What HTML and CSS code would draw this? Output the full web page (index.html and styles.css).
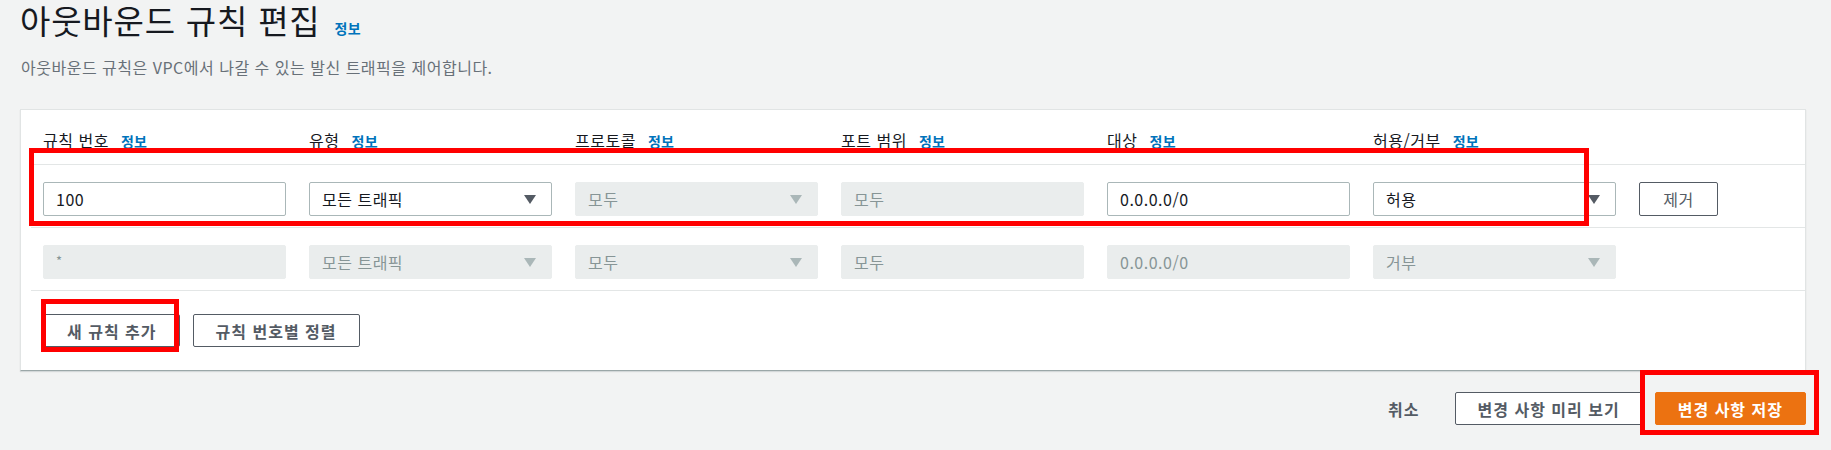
FILE: index.html
```html
<!DOCTYPE html>
<html lang="ko">
<head>
<meta charset="utf-8">
<title>아웃바운드 규칙 편집</title>
<link rel="stylesheet" href="styles.css">
</head>
<body>
<div class="page">
  <h1 class="title">아웃바운드 규칙 편집<a class="info title-info">정보</a></h1>
  <p class="desc">아웃바운드 규칙은 VPC에서 나갈 수 있는 발신 트래픽을 제어합니다.</p>

  <div class="card">
    <div class="table">
      <div class="row head">
        <div class="th">규칙 번호<a class="info">정보</a></div>
        <div class="th">유형<a class="info">정보</a></div>
        <div class="th">프로토콜<a class="info">정보</a></div>
        <div class="th">포트 범위<a class="info">정보</a></div>
        <div class="th">대상<a class="info">정보</a></div>
        <div class="th">허용/거부<a class="info">정보</a></div>
        <div class="th"></div>
      </div>
      <div class="row">
        <div class="field">100</div>
        <div class="field select">모든 트래픽<span class="caret"></span></div>
        <div class="field select disabled">모두<span class="caret"></span></div>
        <div class="field disabled">모두</div>
        <div class="field">0.0.0.0/0</div>
        <div class="field select">허용<span class="caret"></span></div>
        <div class="cell-btn"><button class="btn btn-remove">제거</button></div>
      </div>
      <div class="row">
        <div class="field disabled"><span class="star">*</span></div>
        <div class="field select disabled">모든 트래픽<span class="caret"></span></div>
        <div class="field select disabled">모두<span class="caret"></span></div>
        <div class="field disabled">모두</div>
        <div class="field disabled">0.0.0.0/0</div>
        <div class="field select disabled">거부<span class="caret"></span></div>
        <div class="cell-btn"></div>
      </div>
    </div>
    <div class="card-actions">
      <button class="btn">새 규칙 추가</button>
      <button class="btn">규칙 번호별 정렬</button>
    </div>
  </div>

  <div class="footer">
    <button class="btn btn-link">취소</button>
    <button class="btn">변경 사항 미리 보기</button>
    <button class="btn btn-primary">변경 사항 저장</button>
  </div>

  <div class="mark mark-rules"></div>
  <div class="mark mark-add"></div>
  <div class="mark mark-save"></div>
</div>
</body>
</html>
```

FILE: styles.css
```css
* {
  box-sizing: border-box;
}

html, body {
  margin: 0;
  padding: 0;
  background: #f2f3f3;
}

body {
  font-family: "Noto Sans CJK KR", "Noto Sans", sans-serif;
  color: #16191f;
  font-size: 16px;
  letter-spacing: 0.5px;
}

.page {
  position: relative;
  padding: 0 25px 0 20px;
  min-height: 450px;
}

.title {
  margin: -4px 0 0;
  font-size: 33px;
  line-height: 48px;
  font-weight: 400;
  letter-spacing: 0.8px;
  color: #16191f;
  white-space: nowrap;
}

.info {
  color: #0073bb;
  font-size: 14px;
  line-height: 16px;
  font-weight: 700;
  letter-spacing: 0.3px;
  margin-left: 12px;
  text-decoration: none;
}

.title-info {
  margin-left: 14px;
}

.desc {
  margin: 11px 0 0 1px;
  font-size: 16px;
  line-height: 24px;
  height: 24px;
  color: #687078;
}

.card {
  margin-top: 30px;
  background: #fff;
  border: 1px solid #e1e4e4;
  border-bottom-color: #9ba7a8;
  box-shadow: 0 1px 1px rgba(0, 28, 36, 0.12);
}

.table {
  margin-left: 10px;
}

.row {
  display: grid;
  grid-template-columns: repeat(6, 243px) 79px;
  column-gap: 23px;
  padding: 17px 0 11px 12px;
  border-bottom: 1px solid #e3e6e6;
  align-items: center;
}

.row.head {
  padding: 18px 0 12px 12px;
}

.th {
  height: 24px;
  font-size: 16px;
  line-height: 24px;
  color: #16191f;
  white-space: nowrap;
}

.field {
  height: 34px;
  display: flex;
  align-items: center;
  padding: 0 15px 0 12px;
  border: 1px solid #aab7b8;
  border-radius: 2px;
  background: #fff;
  font-size: 16px;
  color: #16191f;
  white-space: nowrap;
}

.field.disabled {
  background: #eaeded;
  border-color: #eaeded;
  color: #879596;
}

.star {
  font-size: 13px;
  align-self: flex-start;
  margin-top: 5px;
}

.caret {
  margin-left: auto;
  width: 0;
  height: 0;
  border-left: 6px solid transparent;
  border-right: 6px solid transparent;
  border-top: 9px solid #545b64;
}

.field.disabled .caret {
  border-top-color: #aab7b8;
}

.cell-btn {
  display: flex;
}

.btn {
  height: 33px;
  padding: 0 22px;
  border: 1px solid #545b64;
  border-radius: 2px;
  background: #fff;
  color: #545b64;
  font-family: "Noto Sans CJK KR", "Noto Sans", sans-serif;
  font-size: 16px;
  font-weight: 700;
  letter-spacing: 1px;
  line-height: 1;
  white-space: nowrap;
}

.btn-remove {
  width: 79px;
  height: 34px;
  padding: 0;
  font-weight: 400;
  letter-spacing: 0.5px;
  color: #545b64;
}

.card-actions {
  display: flex;
  gap: 13px;
  padding: 23px 0 23px 23px;
}

.footer {
  display: flex;
  justify-content: flex-end;
  gap: 12px;
  margin-top: 21px;
}

.btn-link {
  border-color: transparent;
  background: transparent;
}

.btn-primary {
  background: #ec7211;
  border-color: #ec7211;
  color: #fff;
}

.mark {
  position: absolute;
  border: 5px solid #ff0000;
  pointer-events: none;
}

.mark-rules {
  left: 29px;
  top: 152px;
  width: 1560px;
  height: 78px;
}

.mark-add {
  left: 41px;
  top: 303px;
  width: 138px;
  height: 53px;
}

.mark-save {
  left: 1640px;
  top: 374px;
  width: 179px;
  height: 65px;
}
```
